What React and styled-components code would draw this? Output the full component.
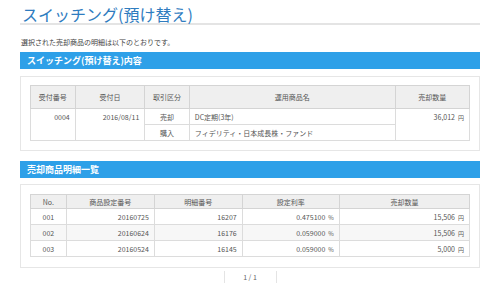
import React from 'react'
import styled, { createGlobalStyle } from 'styled-components'

const GlobalStyle = createGlobalStyle`
  body {
    margin: 0;
    background: #fff;
    font-family: 'Noto Sans CJK JP', 'Noto Sans', sans-serif;
    color: #555;
  }
`

const Page = styled.div`
  width: 460px;
  padding: 0 20px;
`
const Title = styled.h1`
  margin: 0;
  height: 18px;
  padding: 5px 0 0 2px;
  font-size: 16px;
  font-weight: 400;
  line-height: 18px;
  color: #2f7cbf;
  border-bottom: 2px solid #e4e4e4;
`
const Lead = styled.p`
  margin: 12px 0 0 1px;
  font-size: 7px;
  line-height: 10px;
  color: #444;
`
const SectionBar = styled.h2`
  margin: ${(p) => p.top}px 0 0;
  height: 17px;
  padding-left: 7px;
  font-size: 9px;
  font-weight: 700;
  line-height: 17px;
  color: #fff;
  background: #2ea0e8;
`
const Panel = styled.div`
  margin-top: ${(p) => p.top}px;
  padding: ${(p) => p.pad};
  border: 1px solid #e6e6e6;
`
const Table = styled.table`
  width: 100%;
  border-collapse: collapse;
  border: 1px solid #c4c4c4;
  font-size: 7px;
  color: #555;
`
const Th = styled.th`
  width: ${(p) => p.w}px;
  height: ${(p) => p.h}px;
  padding: 0;
  font-weight: 400;
  background: #efefef;
  border: 1px solid #d4d4d4;
  text-align: center;
`
const Td = styled.td`
  height: ${(p) => p.h || 15}px;
  padding: ${(p) => (p.top ? '3px 5px 0' : '0 5px')};
  vertical-align: ${(p) => (p.top ? 'top' : 'middle')};
  text-align: ${(p) => p.align || 'right'};
  border: 1px solid #dcdcdc;
  background: ${(p) => (p.stripe ? '#f7f7f7' : '#fff')};
`
const Unit = styled.span`
  margin-left: 3px;
  font-size: 6px;
`
const Pager = styled.div`
  display: flex;
  justify-content: center;
  margin-top: 3px;
`
const PagerText = styled.span`
  width: 51px;
  height: 12px;
  border-left: 1px solid #e4e4e4;
  border-right: 1px solid #e4e4e4;
  font-size: 7px;
  line-height: 12px;
  text-align: center;
  color: #666;
`

const details = [
  { no: '001', code: '20160725', num: '16207', rate: '0.475100', amount: '15,506' },
  { no: '002', code: '20160624', num: '16176', rate: '0.059000', amount: '15,506' },
  { no: '003', code: '20160524', num: '16145', rate: '0.059000', amount: '5,000' },
]

export default function App() {
  return (
    <Page>
      <GlobalStyle />
      <Title>スイッチング(預け替え)</Title>
      <Lead>選択された売却商品の明細は以下のとおりです。</Lead>

      <SectionBar top={5}>スイッチング(預け替え)内容</SectionBar>
      <Panel top={7} pad='8px 9px 9px'>
        <Table>
          <thead>
            <tr>
              <Th w={44} h={22}>受付番号</Th>
              <Th w={69}>受付日</Th>
              <Th w={44}>取引区分</Th>
              <Th w={208}>運用商品名</Th>
              <Th w={74}>売却数量</Th>
            </tr>
          </thead>
          <tbody>
            <tr>
              <Td rowSpan={2} top>0004</Td>
              <Td rowSpan={2} top>2016/08/11</Td>
              <Td align='center'>売却</Td>
              <Td align='left'>DC定期(3年)</Td>
              <Td rowSpan={2} top>
                36,012<Unit>円</Unit>
              </Td>
            </tr>
            <tr>
              <Td align='center'>購入</Td>
              <Td align='left'>フィデリティ・日本成長株・ファンド</Td>
            </tr>
          </tbody>
        </Table>
      </Panel>

      <SectionBar top={10}>売却商品明細一覧</SectionBar>
      <Panel top={6} pad='9px 9px 10px'>
        <Table>
          <thead>
            <tr>
              <Th w={35} h={13}>No.</Th>
              <Th w={88}>商品設定番号</Th>
              <Th w={88}>明細番号</Th>
              <Th w={97}>設定利率</Th>
              <Th w={131}>売却数量</Th>
            </tr>
          </thead>
          <tbody>
            {details.map((d, i) => (
              <tr key={d.no}>
                <Td align='center' stripe={i === 1}>{d.no}</Td>
                <Td stripe={i === 1}>{d.code}</Td>
                <Td stripe={i === 1}>{d.num}</Td>
                <Td stripe={i === 1}>
                  {d.rate}<Unit>%</Unit>
                </Td>
                <Td stripe={i === 1}>
                  {d.amount}<Unit>円</Unit>
                </Td>
              </tr>
            ))}
          </tbody>
        </Table>
      </Panel>
      <Pager>
        <PagerText>1 / 1</PagerText>
      </Pager>
    </Page>
  )
}
